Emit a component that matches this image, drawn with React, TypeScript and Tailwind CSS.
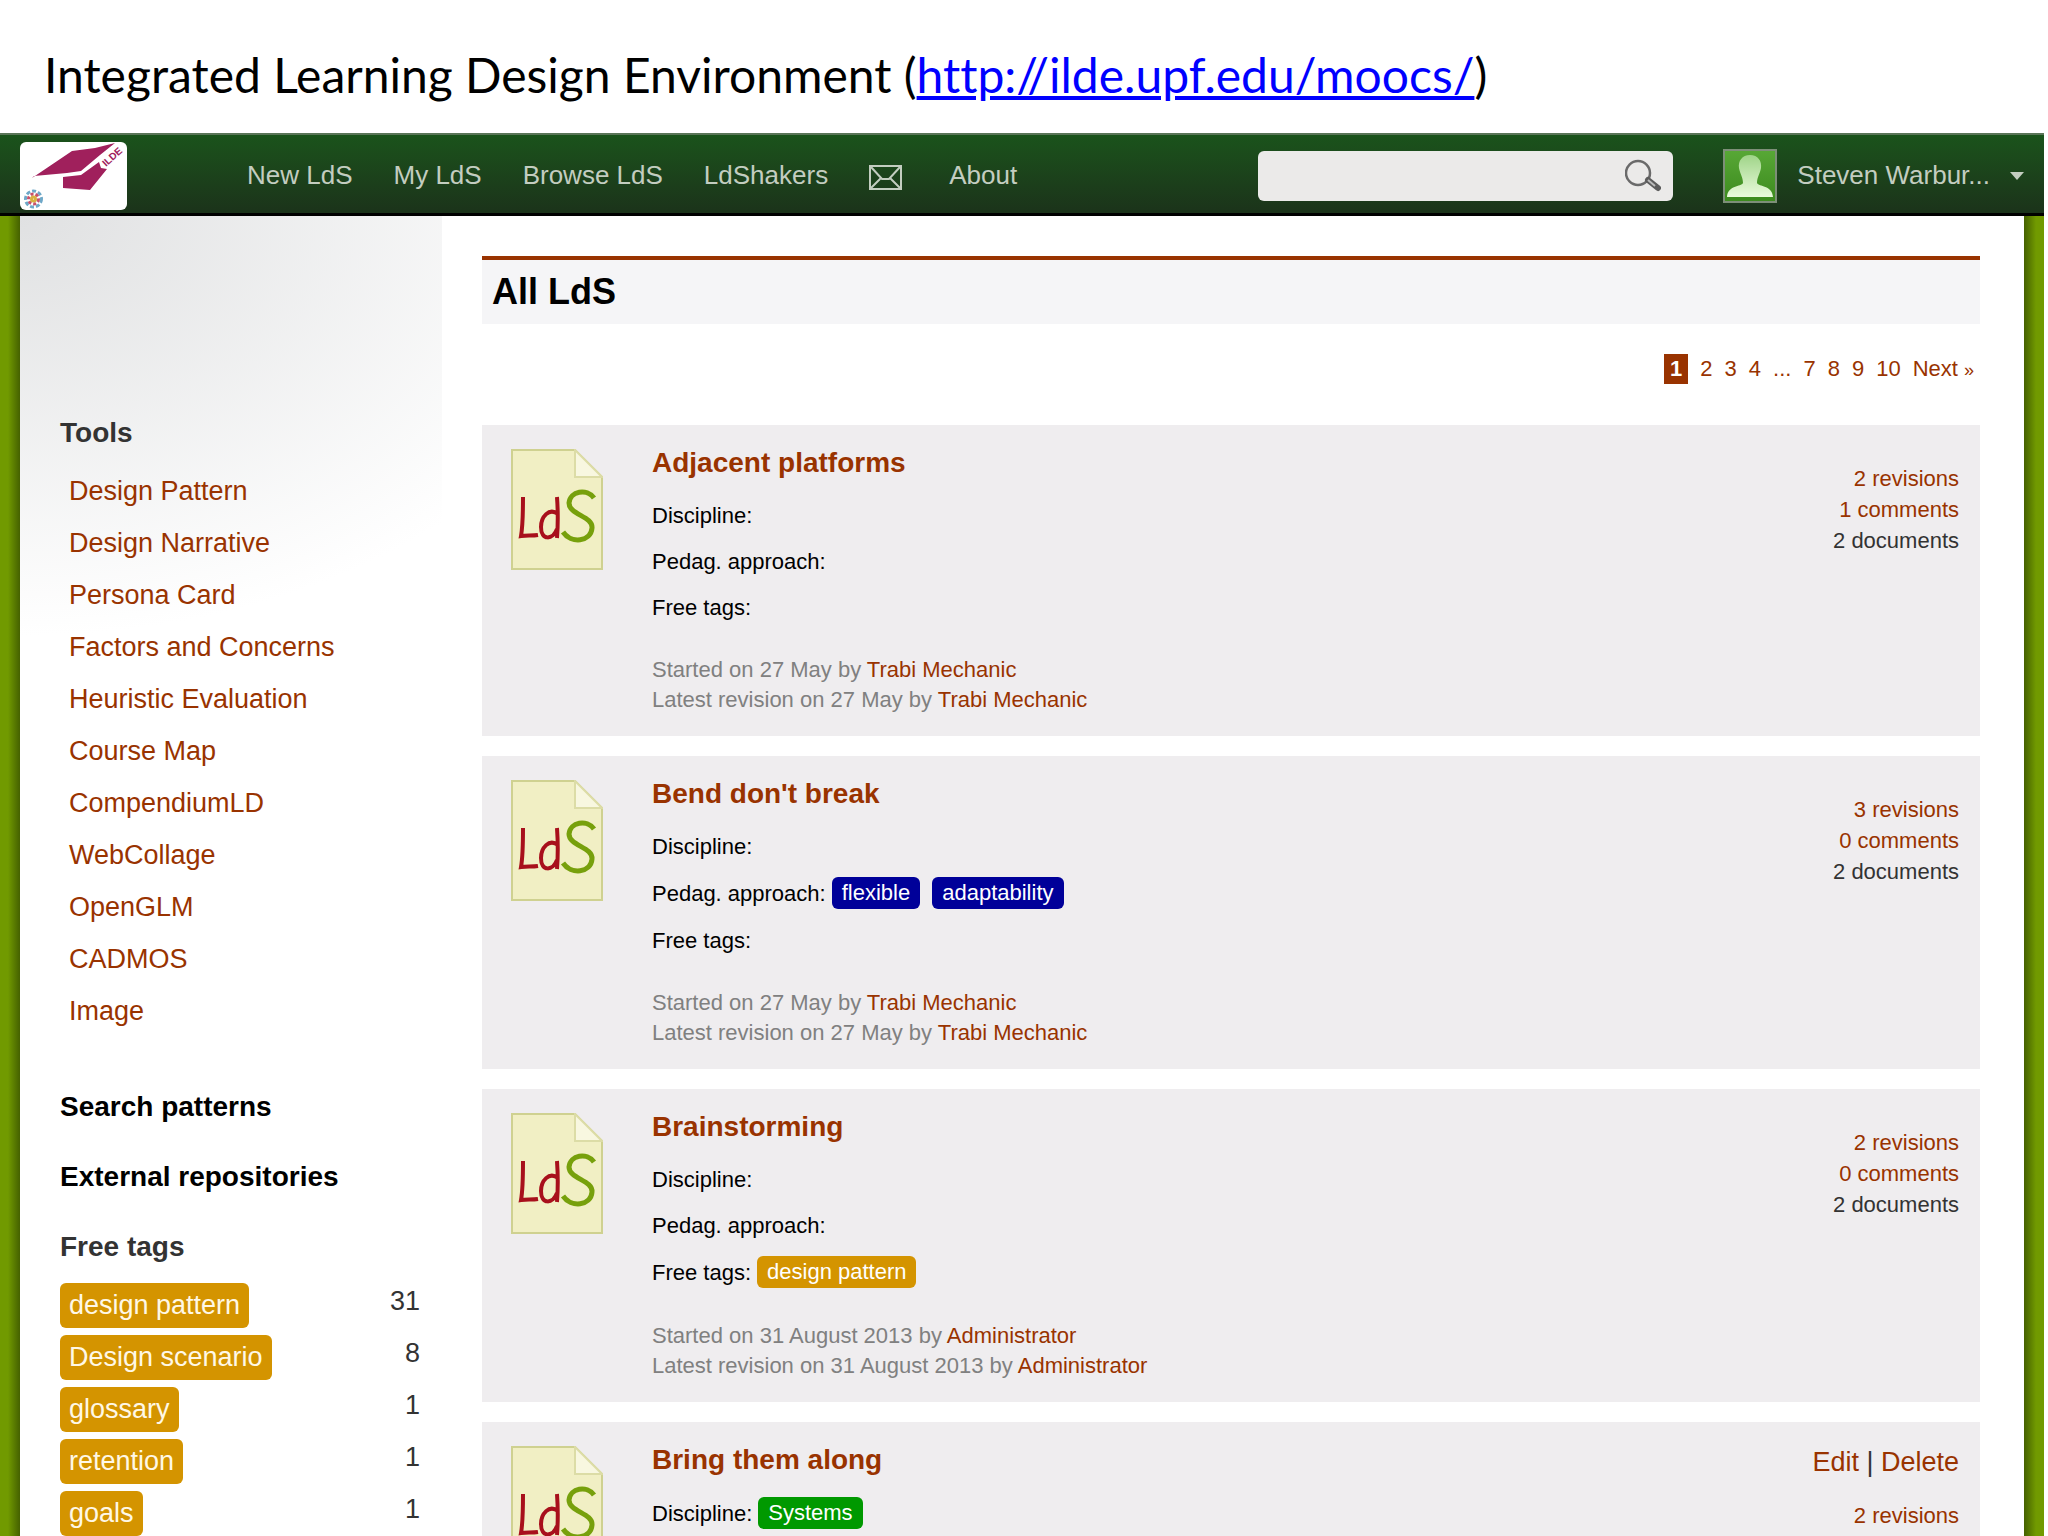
import { ReactNode } from "react";

const navLinks = ["New LdS", "My LdS", "Browse LdS", "LdShakers"];

const tools = [
  "Design Pattern",
  "Design Narrative",
  "Persona Card",
  "Factors and Concerns",
  "Heuristic Evaluation",
  "Course Map",
  "CompendiumLD",
  "WebCollage",
  "OpenGLM",
  "CADMOS",
  "Image",
];

const freeTags = [
  { name: "design pattern", count: 31 },
  { name: "Design scenario", count: 8 },
  { name: "glossary", count: 1 },
  { name: "retention", count: 1 },
  { name: "goals", count: 1 },
];

const pages = ["2", "3", "4", "...", "7", "8", "9", "10"];

type Item = {
  title: string;
  discipline: string[];
  approach?: string[];
  tags?: string[];
  date?: string;
  author?: string;
  revisions: number;
  comments?: number;
  documents?: number;
  editable?: boolean;
};

const items: Item[] = [
  {
    title: "Adjacent platforms",
    discipline: [],
    approach: [],
    tags: [],
    date: "27 May",
    author: "Trabi Mechanic",
    revisions: 2,
    comments: 1,
    documents: 2,
  },
  {
    title: "Bend don't break",
    discipline: [],
    approach: ["flexible", "adaptability"],
    tags: [],
    date: "27 May",
    author: "Trabi Mechanic",
    revisions: 3,
    comments: 0,
    documents: 2,
  },
  {
    title: "Brainstorming",
    discipline: [],
    approach: [],
    tags: ["design pattern"],
    date: "31 August 2013",
    author: "Administrator",
    revisions: 2,
    comments: 0,
    documents: 2,
  },
  {
    title: "Bring them along",
    discipline: ["Systems"],
    revisions: 2,
    editable: true,
  },
];

function Logo() {
  return (
    <svg viewBox="0 0 107 68" className="h-[68px] w-[107px] rounded-md bg-white" aria-label="ILDE">
      <path d="M12 36 L52 9 L75 6 L95 1 L80 13 L61 29 L47 31 L14 34 Z" fill="#a0205c" />
      <path d="M43 35 L61 33 L79 20 L81 26 L87 27 L70 48 L43 46 Z" fill="#a0205c" />
      <text x="86" y="25" fontSize="10" fontWeight="bold" fill="#a0205c" transform="rotate(-42 86 25)">
        ILDE
      </text>
      <g strokeWidth="3" fill="none">
        <circle cx="13.500" cy="57" r="8" stroke="#6fa8c8" strokeDasharray="4 2" />
        <circle cx="13.500" cy="57" r="5" stroke="#c8506a" strokeDasharray="3 2" />
        <circle cx="13.500" cy="57" r="2" stroke="#d8b040" />
      </g>
    </svg>
  );
}

function EnvelopeIcon() {
  return (
    <svg viewBox="0 0 33 25" className="h-[25px] w-[33px]" fill="none" stroke="#c3cdc0" strokeWidth="2">
      <rect x="1" y="1" width="31" height="23" />
      <path d="M2 2 L13 14 H20 L31 2 M2 23 L12 13 M31 23 L21 13" />
    </svg>
  );
}

function SearchIcon() {
  return (
    <svg viewBox="0 0 36 34" className="h-[34px] w-9" fill="none">
      <circle cx="13" cy="14" r="12" stroke="#6a6a6a" strokeWidth="2.500" />
      <path d="M23 21 L33 29" stroke="#5c5c5c" strokeWidth="6" strokeLinecap="round" />
      <path d="M23 21 L30 27" stroke="#bbb" strokeWidth="2" />
    </svg>
  );
}

function Avatar() {
  return (
    <svg viewBox="0 0 54 54" className="size-[54px]" aria-hidden="true">
      <defs>
        <linearGradient id="avatarBg" x1="0" y1="0" x2="0" y2="1">
          <stop offset="0" stopColor="#58a836" />
          <stop offset="1" stopColor="#3c8a1e" />
        </linearGradient>
        <linearGradient id="avatarFg" x1="0" y1="0" x2="0" y2="1">
          <stop offset="0" stopColor="#9fd488" />
          <stop offset="1" stopColor="#eafbdc" />
        </linearGradient>
      </defs>
      <rect x="1" y="1" width="52" height="52" fill="url(#avatarBg)" stroke="#7d8f78" strokeWidth="2" />
      <path
        d="M27 6 C35 6 39 12 38 19 C37 25 34 28 34 34 C36 38 49 36 50 48 H4 C5 36 18 38 20 34 C20 28 17 25 16 19 C15 12 19 6 27 6 Z"
        fill="url(#avatarFg)"
      />
    </svg>
  );
}

function LdsIcon() {
  return (
    <svg viewBox="0 0 92 121" className="h-[121px] w-[92px] shrink-0" fill="none" aria-hidden="true">
      <path d="M1 1 H64 L91 28 V120 H1 Z" fill="#f1efc4" stroke="#cfd190" strokeWidth="2" />
      <path d="M64 1 V28 H91 Z" fill="#f8f7e0" stroke="#dcdca6" strokeWidth="2" />
      <path d="M12 48 C12 62 12 76 10 87 C15 86 21 87 27 86" stroke="#a8101c" strokeWidth="4" />
      <path d="M46 48 C47 62 47 76 46 89 M47 65 C38 58 30 68 30 78 C30 92 42 91 46 80" stroke="#a8101c" strokeWidth="4" />
      <path d="M83 49 C76 39 59 42 58 54 C58 66 82 67 81 79 C80 93 60 95 52 83" stroke="#77a00c" strokeWidth="5" />
    </svg>
  );
}

function Chip({ color, children }: { color: string; children: ReactNode }) {
  return (
    <a href="#" className={`rounded-md px-2.5 text-[22px] leading-8 text-white ${color}`}>
      {children}
    </a>
  );
}

function TagRow({ label, values, color }: { label: string; values: string[]; color: string }) {
  return (
    <div className={`flex items-center text-[22px] text-black ${values.length ? "h-12" : "h-[46px]"}`}>
      <span className="mr-1.5">{label}</span>
      <div className="flex gap-3">
        {values.map((v) => (
          <Chip key={v} color={color}>
            {v}
          </Chip>
        ))}
      </div>
    </div>
  );
}

function Card({ item }: { item: Item }) {
  return (
    <article className="flex bg-[#efedef] pt-5 pr-[21px] pb-[21px] pl-[29px]">
      <div className="pt-1">
        <LdsIcon />
      </div>
      <div className="ml-[49px] flex-1">
        <h3 className="text-[28px] leading-9 font-bold">
          <a href="#">{item.title}</a>
        </h3>
        <div className="mt-[11px]">
          <TagRow label="Discipline:" values={item.discipline} color="bg-[#009900]" />
          {item.approach && <TagRow label="Pedag. approach:" values={item.approach} color="bg-[#000099]" />}
          {item.tags && <TagRow label="Free tags:" values={item.tags} color="bg-[#d49400]" />}
        </div>
        {item.date && (
          <div className="mt-[25px] text-[22px] leading-[30px] text-[#808080]">
            <p>
              Started on {item.date} by <a href="#" className="text-[#993300]">{item.author}</a>
            </p>
            <p>
              Latest revision on {item.date} by <a href="#" className="text-[#993300]">{item.author}</a>
            </p>
          </div>
        )}
      </div>
      <div className="text-right">
        {item.editable && (
          <p className="text-[27px] leading-10 text-[#333]">
            <a href="#" className="text-[#993300]">Edit</a> | <a href="#" className="text-[#993300]">Delete</a>
          </p>
        )}
        <div className="mt-[18px] text-[22px] leading-[31px]">
          <a href="#" className="block">{item.revisions} revisions</a>
          {item.comments !== undefined && <a href="#" className="block">{item.comments} comments</a>}
          {item.documents !== undefined && <p className="text-[#333]">{item.documents} documents</p>}
        </div>
      </div>
    </article>
  );
}

function TopBar() {
  return (
    <header className="flex h-[83px] items-center border-t-2 border-b-3 border-t-[#5a7558] border-b-black bg-linear-to-b from-[#1a531b] to-[#1b331a] pt-[3px] pl-5 text-[26px] text-[#c3cdc0]">
      <a href="#">
        <Logo />
      </a>
      <nav className="ml-[120px] flex items-center gap-[41px]">
        {navLinks.map((n) => (
          <a key={n} href="#">
            {n}
          </a>
        ))}
        <a href="#" aria-label="Messages" className="pt-1">
          <EnvelopeIcon />
        </a>
        <a href="#" className="ml-1.5">About</a>
      </nav>
      <form className="mr-[50px] ml-auto flex h-[50px] w-[415px] items-center rounded-md bg-[#ebeae9] pr-3">
        <input type="search" aria-label="Search" className="h-full min-w-0 flex-1 px-3 text-black outline-none" />
        <button type="button" aria-label="Search">
          <SearchIcon />
        </button>
      </form>
      <Avatar />
      <button type="button" className="ml-5 flex items-center pr-5">
        Steven Warbur...
        <svg viewBox="0 0 14 8" className="ml-5 h-2 w-3.5" fill="#c3cdc0">
          <path d="M0 0 H14 L7 8 Z" />
        </svg>
      </button>
    </header>
  );
}

function Sidebar() {
  return (
    <aside className="w-[422px] shrink-0 pt-[199px] pr-[22px] pl-10">
      <h2 className="text-[28px] leading-9 font-bold text-[#333]">Tools</h2>
      <ul className="mt-3.5 px-[9px] text-[27px] leading-[52px] text-[#993300]">
        {tools.map((t) => (
          <li key={t}>
            <a href="#">{t}</a>
          </li>
        ))}
      </ul>
      <div className="mt-[52px] space-y-[34px] text-[28px] leading-9 font-bold">
        <h2>Search patterns</h2>
        <h2>External repositories</h2>
        <h2 className="text-[#333]">Free tags</h2>
      </div>
      <ul className="mt-[18px] space-y-[7px] text-[27px]">
        {freeTags.map((t) => (
          <li key={t.name} className="flex justify-between leading-[45px]">
            <a href="#" className="rounded-md bg-[#d49400] px-[9px] text-[#fff8e6]">
              {t.name}
            </a>
            <span className="leading-9 text-[#333]">{t.count}</span>
          </li>
        ))}
      </ul>
    </aside>
  );
}

export default function App() {
  return (
    <div className="h-screen overflow-hidden bg-white pr-1 font-['Liberation_Sans',Arial,sans-serif] text-black">
      <h1 className="flex h-[133px] items-center pt-4 pl-11 font-['Lato',sans-serif] text-[48px] [font-variant-ligatures:none]">
        <span>
          Integrated Learning Design Environment (
          <a href="#" className="text-[#0000ff] underline">http://ilde.upf.edu/moocs/</a>)
        </span>
      </h1>
      <TopBar />
      <div className="flex bg-[#719a00]">
        <div className="w-5 shrink-0 bg-linear-to-r from-[#719a00] from-40% to-[#456100]" />
        <div className="flex min-w-0 flex-1 bg-white bg-[radial-gradient(620px_420px_at_top_left,#e0e1e2,#ffffff)] bg-size-[422px_420px] bg-no-repeat">
          <Sidebar />
          <main className="ml-10 min-w-0 flex-1 pt-10 pr-11 text-[#993300]">
            <h2 className="border-t-4 border-[#993300] bg-[#f5f5f7] px-2.5 text-[36px] leading-[64px] font-bold text-black">
              All LdS
            </h2>
            <nav aria-label="Pages" className="mt-[30px] flex items-center justify-end gap-3 pr-1.5 text-[22px] leading-[30px]">
              <span className="bg-[#993300] px-1.5 font-bold text-white">1</span>
              {pages.map((p) =>
                p === "..." ? (
                  <span key={p}>{p}</span>
                ) : (
                  <a key={p} href="#">
                    {p}
                  </a>
                )
              )}
              <a href="#">
                Next <span className="text-lg">»</span>
              </a>
            </nav>
            <div className="mt-[41px] space-y-5">
              {items.map((item) => (
                <Card key={item.title} item={item} />
              ))}
            </div>
          </main>
        </div>
        <div className="w-5 shrink-0 bg-linear-to-l from-[#719a00] from-40% to-[#456100]" />
      </div>
    </div>
  );
}
